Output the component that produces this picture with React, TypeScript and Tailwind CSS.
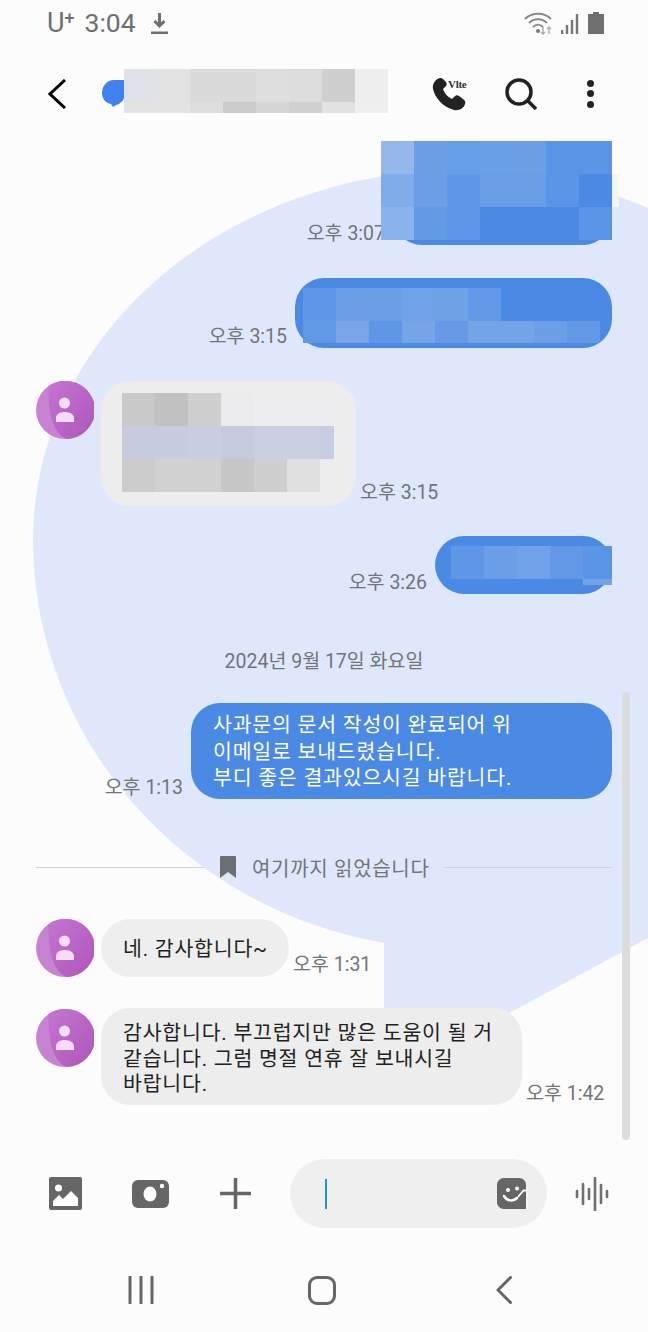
const ICON = '#666666';

type PixelRow = { h: string; cells: string[] };

function Pixels({ rows, className }: { rows: PixelRow[]; className: string }) {
  return (
    <div className={`overflow-hidden ${className}`}>
      {rows.map((row, i) => (
        <div key={i} className="flex">
          {row.cells.map((c, j) => (
            <div key={j} className={`w-[33px] shrink-0 ${row.h} ${c}`} />
          ))}
        </div>
      ))}
    </div>
  );
}

function Avatar({ className = '' }: { className?: string }) {
  return (
    <svg viewBox="0 0 58 58" className={`w-[58px] h-[58px] shrink-0 ${className}`}>
      <defs>
        <linearGradient id="av" x1="0" y1="0" x2="1" y2="1">
          <stop offset="0" stopColor="#c574d2" />
          <stop offset="1" stopColor="#ad56b9" />
        </linearGradient>
      </defs>
      <circle cx="29" cy="29" r="29" fill="#c783d2" />
      <path d="M12.5 5 A29 29 0 0 1 29 0 A29 29 0 0 1 31 58 C20 54 12 40 12.5 5 Z" fill="url(#av)" />
      <circle cx="28.5" cy="22" r="5.5" fill="#f3dcf6" />
      <path d="M20 41 V37 C20 33 24 31 28.5 31 C33 31 38 33 38 37 V41 Z" fill="#f3dcf6" />
    </svg>
  );
}

function Time({ children, className = '' }: { children: React.ReactNode; className?: string }) {
  return (
    <span className={`text-[19.5px] leading-[24px] translate-y-[1px] whitespace-nowrap text-[#717478] ${className}`}>{children}</span>
  );
}

export default function App() {
  return (
    <div className="relative w-[648px] h-[1332px] overflow-hidden bg-[#fcfcfc] [font-family:Roboto,'Noto_Sans_CJK_KR',sans-serif]">
      {/* wallpaper shape */}
      <svg viewBox="0 0 648 1332" className="absolute inset-0 w-[648px] h-[1332px]">
        <path
          d="M33 540 A427 370 0 0 1 648 208 L648 938 L384 1081 L384 943 A427 410 0 0 1 33 540 Z"
          fill="#dfe8fb"
        />
      </svg>

      <div className="relative flex flex-col h-full">
        {/* Status bar */}
        <div className="flex items-center h-[46px] pl-[47px] text-[#6f6f6f]">
          <span className="text-[27px] leading-none">U</span>
          <span className="text-[18px] leading-none font-medium -mt-[10px]">+</span>
          <span className="text-[26.5px] leading-none ml-[10px]">3:04</span>
          <svg viewBox="0 0 17 21" className="w-[17px] h-[21px] ml-[15px]">
            <path d="M8.5 0 V12 M3.5 8 L8.5 13 L13.5 8" fill="none" stroke="#6f6f6f" strokeWidth="3" />
            <rect x="0" y="18.5" width="17" height="2.5" fill="#6f6f6f" />
          </svg>
          <svg viewBox="0 0 30 24" className="w-[30px] h-[24px] ml-[356px]">
            <path d="M1 8 C8 1 20 1 27 8 M5 12 C10 7 18 7 23 12 M9 16 C12 13 16 13 19 16" fill="none" stroke="#8a8a8a" strokeWidth="2" />
            <circle cx="14" cy="20" r="2" fill="#777777" />
            <path d="M19 23 V16 M17 21 L19 23 L21 21 M25 23 V16 M23 18 L25 16 L27 18" fill="none" stroke="#b0b0b0" strokeWidth="1.5" />
          </svg>
          <svg viewBox="0 0 18 21" className="w-[18px] h-[21px] ml-[7px]">
            <path d="M1 21 V17 M6 21 V12 M11 21 V7 M16 21 V1" stroke="#777777" strokeWidth="2.4" fill="none" />
          </svg>
          <svg viewBox="0 0 16 22" className="w-[16px] h-[22px] ml-[9px]">
            <path d="M5 0 H11 V2 H16 V22 H0 V2 H5 Z" fill="#6f6f6f" />
          </svg>
        </div>

        {/* Header */}
        <div className="flex items-center h-[95px] pl-[48px]">
          <svg viewBox="0 0 18 30" className="w-[18px] h-[30px]">
            <path d="M17 1 L2 15 L17 29" fill="none" stroke="#000000" strokeWidth="3" />
          </svg>
          <svg viewBox="0 0 23 27" className="w-[23px] h-[27px] ml-[36px]">
            <path d="M12 0 C5 0 0 6 0 13 C0 19 4 23 9 24 L11 27 L14 25 C19 24 23 19 23 13 L23 0 Z" fill="#3f82ee" />
          </svg>
          <Pixels
            className="w-[264px] h-[44px] -ml-px -mt-[6px]"
            rows={[
              { h: 'h-[33px]', cells: ['bg-[#dfe3e9]', 'bg-[#e3e3e3]', 'bg-[#dadada]', 'bg-[#dadada]', 'bg-[#dedede]', 'bg-[#dcdcdc]', 'bg-[#cfcfcf]', 'bg-[#eeeeee]'] },
              { h: 'h-[11px]', cells: ['bg-[#e3e3e3]', 'bg-[#e3e3e3]', 'bg-[#dddddd]', 'bg-[#cbcbcb]', 'bg-[#d6d6d6]', 'bg-[#d0d0d0]', 'bg-[#e2e2e2]', 'bg-[#efefef]'] },
            ]}
          />
          <div className="relative w-[37px] h-[34px] ml-[44px]">
            <svg viewBox="0 0 34 34" className="w-[34px] h-[34px]">
              <path
                d="M8 1 C4 2 0 6 1 12 C3 21 11 30 22 33 C27 34 32 31 33 27 C34 25 33 24 31 22 L27 19 C25 18 24 18 22 20 L20 22 C15 20 12 15 11 12 L13 10 C15 9 15 7 14 5 L11 2 C10 1 9 1 8 1 Z"
                fill="#222222"
              />
            </svg>
            <span className="absolute left-[16px] top-[1px] text-[11px] leading-[12px] font-bold tracking-[-0.3px] text-[#333333] [font-family:'Liberation_Serif',serif]">Vlte</span>
          </div>
          <svg viewBox="0 0 32 32" className="w-[32px] h-[32px] ml-[36px]">
            <circle cx="14" cy="14" r="12" fill="none" stroke="#222222" strokeWidth="3.5" />
            <path d="M22.5 22.5 L31 31" stroke="#222222" strokeWidth="3.5" />
          </svg>
          <div className="flex flex-col gap-[3.5px] ml-[50px]">
            <div className="w-[7px] h-[7px] rounded-full bg-[#222222]" />
            <div className="w-[7px] h-[7px] rounded-full bg-[#222222]" />
            <div className="w-[7px] h-[7px] rounded-full bg-[#222222]" />
          </div>
        </div>

        {/* Messages */}
        <div className="relative h-[1018px] overflow-hidden">
          <div className="flex justify-end items-end pr-[36px]">
            <Time className="mr-[8px]">오후 3:07</Time>
            <div className="relative w-[219px] h-[104px] rounded-[29px] bg-[#4a8ae4]">
              <Pixels
                className="absolute -left-[12px] top-0 w-[231px] h-[99px]"
                rows={[
                  { h: 'h-[33px]', cells: ['bg-[#94b8ec]', 'bg-[#6b9fe5]', 'bg-[#669ee7]', 'bg-[#6aa0e7]', 'bg-[#6ba0e6]', 'bg-[#5a94e6]', 'bg-[#5a94e6]'] },
                  { h: 'h-[33px]', cells: ['bg-[#80abeb]', 'bg-[#6a9ee6]', 'bg-[#5f97e6]', 'bg-[#699ee6]', 'bg-[#699ee6]', 'bg-[#5a94e6]', 'bg-[#4a8ae4]'] },
                  { h: 'h-[33px]', cells: ['bg-[#8ab2ec]', 'bg-[#6499e6]', 'bg-[#5f97e6]', 'bg-[#4a8ae4]', 'bg-[#4a8ae4]', 'bg-[#4a8ae4]', 'bg-[#5a94e6]'] },
                ]}
              />
              <div className="absolute -right-[7px] top-[33px] w-[7px] h-[33px] bg-[#eff5fd]" />
            </div>
          </div>

          <div className="flex justify-end items-end gap-[8px] pr-[36px] mt-[33px]">
            <Time>오후 3:15</Time>
            <div className="relative w-[317px] h-[70px] rounded-[29px] bg-[#4a8ae4]">
              <Pixels
                className="absolute left-[8px] top-[10px] w-[297px] h-[55px]"
                rows={[
                  { h: 'h-[33px]', cells: ['bg-[#5f97e6]', 'bg-[#6a9ee6]', 'bg-[#6a9ee6]', 'bg-[#6fa2e6]', 'bg-[#6da2e5]', 'bg-[#6398e6]', 'bg-[#4a8ae4]', 'bg-[#4a8ae4]', 'bg-[#4a8ae4]'] },
                  { h: 'h-[22px]', cells: ['bg-[#6098e6]', 'bg-[#79a5e3]', 'bg-[#5f97e6]', 'bg-[#75a5e4]', 'bg-[#6699e6]', 'bg-[#73a4e5]', 'bg-[#73a4e5]', 'bg-[#6b9ee5]', 'bg-[#6398e6]'] },
                ]}
              />
            </div>
          </div>

          <div className="flex items-end pl-[36px] mt-[33px]">
            <Avatar className="self-start" />
            <div className="relative w-[255px] h-[125px] ml-[7px] rounded-[29px] bg-[#ededee]">
              <Pixels
                className="absolute left-[21px] top-[12px] w-[212px] h-[99px]"
                rows={[
                  { h: 'h-[33px]', cells: ['bg-[#c9c9c9]', 'bg-[#c1c1c1]', 'bg-[#cfcfcf]', 'bg-[#ebebee]', 'bg-[#ededf0]', 'bg-[#ededf0]', 'bg-[#ededf0]'] },
                  { h: 'h-[33px]', cells: ['bg-[#c6cce0]', 'bg-[#c6cce0]', 'bg-[#c8cde1]', 'bg-[#c5cbdf]', 'bg-[#cad0e2]', 'bg-[#cad0e2]', 'bg-[#c7cde0]'] },
                  { h: 'h-[33px]', cells: ['bg-[#cbcbcb]', 'bg-[#d1d1d1]', 'bg-[#d1d1d1]', 'bg-[#c6c6c6]', 'bg-[#cfcfcf]', 'bg-[#e0e0e0]', 'bg-[#ededee]'] },
                ]}
              />
            </div>
            <Time className="ml-[4px] mb-[2px]">오후 3:15</Time>
          </div>

          <div className="flex justify-end items-end gap-[8px] pr-[36px] mt-[30px]">
            <Time>오후 3:26</Time>
            <div className="relative w-[177px] h-[58px] rounded-[29px] bg-[#4a8ae4]">
              <Pixels
                className="absolute left-[16px] top-[10px] w-[161px] h-[39px]"
                rows={[
                  { h: 'h-[33px]', cells: ['bg-[#5f97e6]', 'bg-[#6a9ee6]', 'bg-[#6fa2e6]', 'bg-[#6398e6]', 'bg-[#5a94e6]'] },
                  { h: 'h-[6px]', cells: ['bg-transparent', 'bg-transparent', 'bg-transparent', 'bg-transparent', 'bg-[#73a4e5]'] },
                ]}
              />
            </div>
          </div>

          <div className="mt-[56px] h-[24px] text-center text-[19.5px] leading-[24px] whitespace-nowrap text-[#717478]">2024년 9월 17일 화요일</div>

          <div className="flex justify-end items-end gap-[8px] pr-[36px] mt-[29px]">
            <Time>오후 1:13</Time>
            <div className="w-[421px] h-[96px] pl-[22px] pt-[9px] rounded-[29px] bg-[#4a8ae4] text-white text-[20.5px] leading-[26.5px] tracking-[0.8px] whitespace-nowrap">
              사과문의 문서 작성이 완료되어 위<br />
              이메일로 보내드렸습니다.<br />
              부디 좋은 결과있으시길 바랍니다.
            </div>
          </div>

          <div className="flex items-center h-[24px] mt-[56px] px-[36px]">
            <div className="w-[168px] h-px bg-[#cfd2d6]" />
            <svg viewBox="0 0 16 22" className="w-[16px] h-[22px] ml-[16px]">
              <path d="M0 1 C0 0 1 0 1 0 H15 C16 0 16 1 16 1 V22 L8 16 L0 22 Z" fill="#6b6e72" />
            </svg>
            <span className="w-[177px] ml-[16px] pt-[4px] text-[20px] leading-[24px] tracking-[0.7px] whitespace-nowrap text-[#717478]">여기까지 읽었습니다</span>
            <div className="w-[168px] h-px ml-[15px] bg-[#cfd2d6]" />
          </div>

          <div className="flex items-end pl-[36px] mt-[40px]">
            <Avatar />
            <div className="w-[188px] h-[58px] ml-[7px] pl-[22px] rounded-[29px] bg-[#eeeeee] text-[20.5px] leading-[60px] tracking-[0.8px] whitespace-nowrap text-[#222222]">
              네. 감사합니다~
            </div>
            <Time className="ml-[4px] mb-px">오후 1:31</Time>
          </div>

          <div className="flex items-end pl-[36px] mt-[31px]">
            <Avatar className="self-start mt-px" />
            <div className="w-[421px] h-[97px] ml-[7px] pl-[22px] pt-[13px] rounded-[29px] bg-[#ededed] text-[20.5px] leading-[25.5px] tracking-[0.8px] whitespace-nowrap text-[#222222]">
              감사합니다. 부끄럽지만 많은 도움이 될 거<br />
              같습니다. 그럼 명절 연휴 잘 보내시길<br />
              바랍니다.
            </div>
            <Time className="ml-[4px]">오후 1:42</Time>
          </div>

          {/* scroll indicator */}
          <div className="absolute left-[622px] top-[551px] w-[8px] h-[448px] rounded-full bg-[#dcdcdc]" />
        </div>

        {/* Composer */}
        <div className="flex items-center h-[69px] pl-[49px]">
          <svg viewBox="0 0 33 33" className="w-[33px] h-[33px]">
            <rect width="33" height="33" rx="2" fill={ICON} />
            <circle cx="9.5" cy="11" r="3.5" fill="#ffffff" />
            <path d="M4 29 V24 L10 18 L14 22 L22 14 L29 21 V29 Z" fill="#ffffff" />
          </svg>
          <svg viewBox="0 0 37 28" className="w-[37px] h-[28px] ml-[50px]">
            <rect width="37" height="28" rx="6" fill={ICON} />
            <ellipse cx="18" cy="14" rx="6.5" ry="7.5" fill="#ffffff" />
            <circle cx="30" cy="6" r="2.2" fill="#ffffff" />
          </svg>
          <svg viewBox="0 0 31 31" className="w-[31px] h-[31px] ml-[51px]">
            <path d="M15.5 0 V31 M0 15.5 H31" stroke={ICON} strokeWidth="3.5" />
          </svg>
          <div className="flex items-center justify-between w-[257px] h-[69px] ml-[39px] pl-[35px] pr-[18px] rounded-full bg-[#efefef]">
            <div className="w-[2px] h-[30px] bg-[#1e9ac0]" />
            <svg viewBox="0 0 32 32" className="w-[32px] h-[32px]">
              <path d="M7 0 H22 C26 0 29 3 29 7 V31 H7 C3 31 0 28 0 24 V7 C0 3 3 0 7 0 Z" fill={ICON} />
              <circle cx="11" cy="12" r="2" fill="#ffffff" />
              <circle cx="20" cy="10.5" r="2" fill="#ffffff" />
              <path d="M7 18 C10 23 16 24 20 20" fill="none" stroke="#ffffff" strokeWidth="2.5" strokeLinecap="round" />
              <path d="M21 19 L26.5 12.5 H30.5 V31" fill="none" stroke="#ffffff" strokeWidth="1.8" />
              <path d="M24 31 H32 V12 H30.5 V31 Z" fill="#efefef" />
            </svg>
          </div>
          <svg viewBox="0 0 34 34" className="w-[34px] h-[34px] ml-[28px]">
            <path
              d="M2 14 V20 M8 7 V27 M14 12 V22 M20 1 V33 M26 8 V26 M32 14 V20"
              stroke="#707070"
              strokeWidth="2.6"
              strokeLinecap="round"
            />
          </svg>
        </div>

        {/* Navigation bar */}
        <div className="flex items-center flex-1 pl-[128px] pt-[20px]">
          <svg viewBox="0 0 26 28" className="w-[26px] h-[28px]">
            <path d="M2 1 V27 M13 1 V27 M24 1 V27" stroke={ICON} strokeWidth="3" strokeLinecap="round" />
          </svg>
          <div className="w-[28px] h-[29px] ml-[154px] rounded-[9px] border-[3px] border-[#666666]" />
          <svg viewBox="0 0 16 28" className="w-[16px] h-[28px] ml-[160px]">
            <path d="M14.5 1.5 L2 14 L14.5 26.5" fill="none" stroke={ICON} strokeWidth="3" strokeLinecap="round" />
          </svg>
        </div>
      </div>
    </div>
  );
}
